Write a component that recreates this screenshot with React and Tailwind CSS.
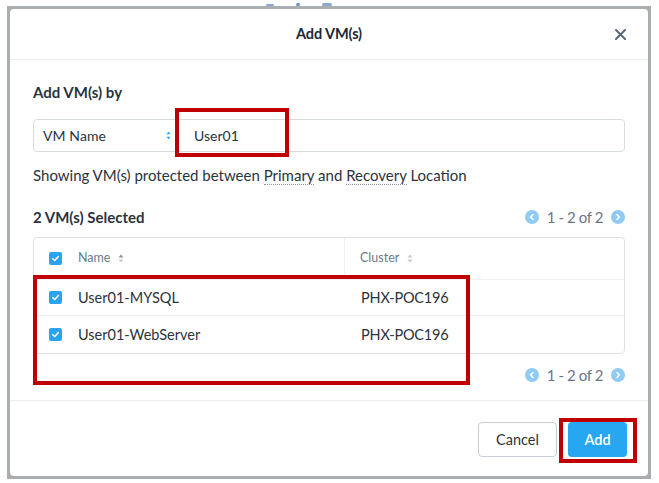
import React from "react";

const Check = () => (
  <span className="w-[13px] h-[13px] rounded-[2px] bg-[#2aa3f0] flex items-center justify-center shrink-0">
    <svg width="9" height="9" viewBox="0 0 10 10" fill="none">
      <path d="M2 5.2 L4.2 7.3 L8.2 2.8" stroke="white" strokeWidth="1.7" strokeLinecap="round" strokeLinejoin="round" />
    </svg>
  </span>
);

const Sort = ({ active }) => (
  <svg width="6" height="9" viewBox="0 0 6 9" className="ml-[8px]">
    <path d="M3 0.5 L5.5 3.5 L0.5 3.5 Z" fill={active ? "#8a95a3" : "#c3cad2"} />
    <path d="M3 8.5 L5.5 5.5 L0.5 5.5 Z" fill="#c3cad2" />
  </svg>
);

const Circ = ({ dir }) => (
  <span className="w-[14px] h-[14px] rounded-full bg-[#8fcbf5] flex items-center justify-center">
    <svg width="8" height="8" viewBox="0 0 8 8" fill="none">
      <path d={dir === "l" ? "M5 1.5 L2.6 4 L5 6.5" : "M3 1.5 L5.4 4 L3 6.5"} stroke="white" strokeWidth="1.6" strokeLinecap="round" strokeLinejoin="round" />
    </svg>
  </span>
);

const Pager = () => (
  <div className="flex items-center gap-[8px] text-[15px] text-[#6b7683]">
    <Circ dir="l" />
    <span className="tracking-[-0.4px]">1 - 2 of 2</span>
    <Circ dir="r" />
  </div>
);

export default function App() {
  return (
    <div
      className="w-[659px] h-[483px] bg-white relative pt-[6px] pl-[7px]"
      style={{ fontFamily: "Lato, 'Open Sans', sans-serif" }}
    >
      {/* top-edge leftovers of the page behind */}
      <div className="absolute left-[266px] top-0 w-[110px] h-[6px] flex gap-[22px] items-end">
        <span className="w-[8px] h-[2px] bg-[#8aa8d0] rounded" />
        <span className="w-[4px] h-[3px] bg-[#6f93c4] rounded" />
        <span className="w-[10px] h-[3px] bg-[#8aa8d0] rounded" />
      </div>
      <div className="w-[644px] h-[473px] bg-[#abaeb1] p-[3px]">
        <div className="w-full h-full bg-white rounded-[4px] flex flex-col">
          {/* header */}
          <div className="h-[51px] shrink-0 border-b border-[#eceef1] flex items-center justify-center relative">
            <span className="text-[14.5px] font-bold text-[#22272e] tracking-[-0.1px]">Add VM(s)</span>
            <svg className="absolute right-[22px] top-[20px]" width="11" height="11" viewBox="0 0 11 11">
              <path d="M1 1 L10 10 M10 1 L1 10" stroke="#5b6878" strokeWidth="2" strokeLinecap="round" />
            </svg>
          </div>
          {/* body */}
          <div className="flex-1 px-[23px] pt-[23px] text-[#2b333d]">
            <div className="text-[15px] font-bold leading-[18px]">Add VM(s) by</div>
            <div className="mt-[18px] h-[33px] border border-[#d7dce2] rounded-[4px] flex items-center text-[14px]">
              <div className="w-[145px] pl-[9px] pr-[8px] flex items-center justify-between h-full">
                <span className="tracking-[0.1px]">VM Name</span>
                <svg width="5" height="9" viewBox="0 0 5 9">
                  <path d="M2.5 0.5 L4.5 3.2 L0.5 3.2 Z" fill="#2aa3f0" />
                  <path d="M2.5 8.5 L4.5 5.8 L0.5 5.8 Z" fill="#2aa3f0" />
                </svg>
              </div>
              <span className="ml-[15px]">User01</span>
            </div>
            <div className="mt-[14px] text-[15px] leading-[18px]">
              Showing VM(s) protected between{" "}
              <span className="border-b border-dotted border-[#8d96a0]">Primary</span> and{" "}
              <span className="border-b border-dotted border-[#8d96a0]">Recovery</span> Location
            </div>
            <div className="mt-[24px] flex items-center justify-between h-[18px]">
              <span className="text-[15px] font-bold">2 VM(s) Selected</span>
              <Pager />
            </div>
            <div className="mt-[11px] h-[117px] border border-[#dde1e6] rounded-[4px] flex flex-col">
              <div className="h-[42px] flex border-b border-[#eef0f2] text-[12.5px] text-[#6b7a8c]">
                <div className="w-[311px] border-r border-[#eef0f2] flex items-center pl-[15px]">
                  <Check />
                  <span className="ml-[16px]">Name</span>
                  <Sort active />
                </div>
                <div className="flex items-center pl-[15px]">
                  <span>Cluster</span>
                  <Sort />
                </div>
              </div>
              {["User01-MYSQL", "User01-WebServer"].map((n, i) => (
                <div key={n} className={`h-[37px] flex items-center text-[14.5px] ${i === 0 ? "border-b border-[#eef0f2]" : ""}`}>
                  <div className="w-[311px] flex items-center pl-[15px]">
                    <Check />
                    <span className="ml-[16px]">{n}</span>
                  </div>
                  <span className="pl-[16px] tracking-[-0.2px]">PHX-POC196</span>
                </div>
              ))}
            </div>
            <div className="mt-[10px] flex justify-end">
              <Pager />
            </div>
          </div>
          {/* footer */}
          <div className="h-[76px] shrink-0 border-t border-[#eceef1] flex items-start justify-end gap-[11px] pt-[21px] pr-[21px]">
            <button className="w-[79px] h-[35px] border border-[#c9ced6] rounded-[4px] text-[14.5px] text-[#2b333d] bg-white">Cancel</button>
            <button className="w-[59px] h-[35px] rounded-[4px] text-[14.5px] font-semibold text-white bg-[#27a6f2]">Add</button>
          </div>
        </div>
      </div>
      {/* annotation boxes */}
      <div className="absolute left-[175px] top-[108px] w-[114px] h-[49px] border-[4px] border-[#c00000]" />
      <div className="absolute left-[33px] top-[275px] w-[437px] h-[110px] border-[4px] border-[#c00000]" />
      <div className="absolute left-[559px] top-[418px] w-[78px] h-[45px] border-[4px] border-[#c00000]" />
    </div>
  );
}
